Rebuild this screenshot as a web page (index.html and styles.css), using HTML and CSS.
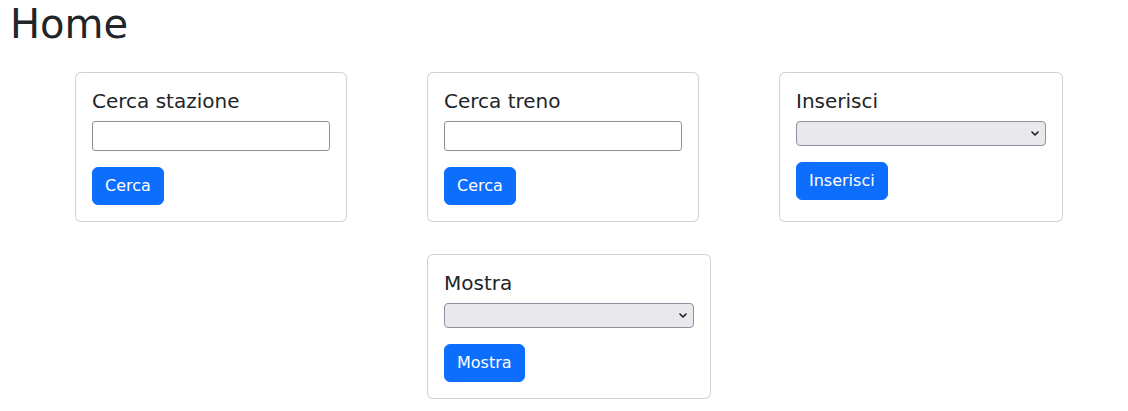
FILE: index.html
```html
<!DOCTYPE html>
<html lang="it">
<head>
<meta charset="utf-8">
<title>Home</title>
<link rel="stylesheet" href="styles.css">
</head>
<body>
<h1 class="page-title">Home</h1>
<div class="cards">
  <div class="card">
    <h5 class="card-title">Cerca stazione</h5>
    <input class="field" type="text">
    <button class="btn">Cerca</button>
  </div>
  <div class="card">
    <h5 class="card-title">Cerca treno</h5>
    <input class="field" type="text">
    <button class="btn">Cerca</button>
  </div>
  <div class="card">
    <h5 class="card-title">Inserisci</h5>
    <span class="picker-wrap">
      <select class="picker"><option></option></select>
      <svg class="chevron" width="8" height="5" viewBox="0 0 8 5" aria-hidden="true"><path d="M1 1 L4 4 L7 1" fill="none" stroke="#1c1b22" stroke-width="1.6" stroke-linecap="round" stroke-linejoin="round"/></svg>
    </span>
    <button class="btn">Inserisci</button>
  </div>
  <div class="card card-second">
    <h5 class="card-title">Mostra</h5>
    <span class="picker-wrap">
      <select class="picker"><option></option></select>
      <svg class="chevron" width="8" height="5" viewBox="0 0 8 5" aria-hidden="true"><path d="M1 1 L4 4 L7 1" fill="none" stroke="#1c1b22" stroke-width="1.6" stroke-linecap="round" stroke-linejoin="round"/></svg>
    </span>
    <button class="btn">Mostra</button>
  </div>
</div>
</body>
</html>
```
FILE: styles.css
```css
* { box-sizing: border-box; }
body {
  margin: 0;
  font-family: "DejaVu Sans", sans-serif;
  font-size: 16px;
  line-height: 1.5;
  color: #212529;
  background: #fff;
}
.page-title {
  margin: 0 0 24px 0;
  padding-left: 10px;
  font-size: 40px;
  font-weight: 400;
  line-height: 48px;
}
.cards {
  display: grid;
  grid-template-columns: 272px 272px auto;
  column-gap: 80px;
  row-gap: 32px;
  padding-left: 75px;
  justify-items: start;
}
.card {
  display: flex;
  flex-direction: column;
  align-items: flex-start;
  width: max-content;
  padding: 16px;
  border: 1px solid rgba(0,0,0,.175);
  border-radius: 6px;
  background: #fff;
}
.card-second { grid-column: 2; }
.card-title {
  margin: 0 0 8px 0;
  font-size: 20px;
  font-weight: 400;
  line-height: 1.2;
}
.field {
  display: block;
  width: 238px;
  height: 30px;
  margin: 0 0 16px 0;
  padding: 1px 4px;
  font-family: inherit;
  font-size: inherit;
  line-height: inherit;
  background: #fff;
  border: 1px solid #8f8f9d;
  border-radius: 3px;
  outline: none;
}
.picker-wrap {
  position: relative;
  display: block;
  margin: 0 0 16px 0;
}
.picker {
  display: block;
  width: 250px;
  height: 25px;
  margin: 0;
  padding: 0 24px 0 4px;
  font-family: inherit;
  font-size: inherit;
  line-height: inherit;
  -webkit-appearance: none;
  appearance: none;
  background: #e9e9ed;
  border: 1px solid #8f8f9d;
  border-radius: 4px;
  color: #1c1b22;
  outline: none;
}
.chevron {
  position: absolute;
  right: 7px;
  top: 10px;
  pointer-events: none;
}
.btn {
  margin: 0;
  padding: 6px 12px;
  font-family: inherit;
  font-size: 16px;
  line-height: 1.5;
  color: #fff;
  background: #0d6efd;
  border: 1px solid #0d6efd;
  border-radius: 6px;
  cursor: pointer;
}
```
